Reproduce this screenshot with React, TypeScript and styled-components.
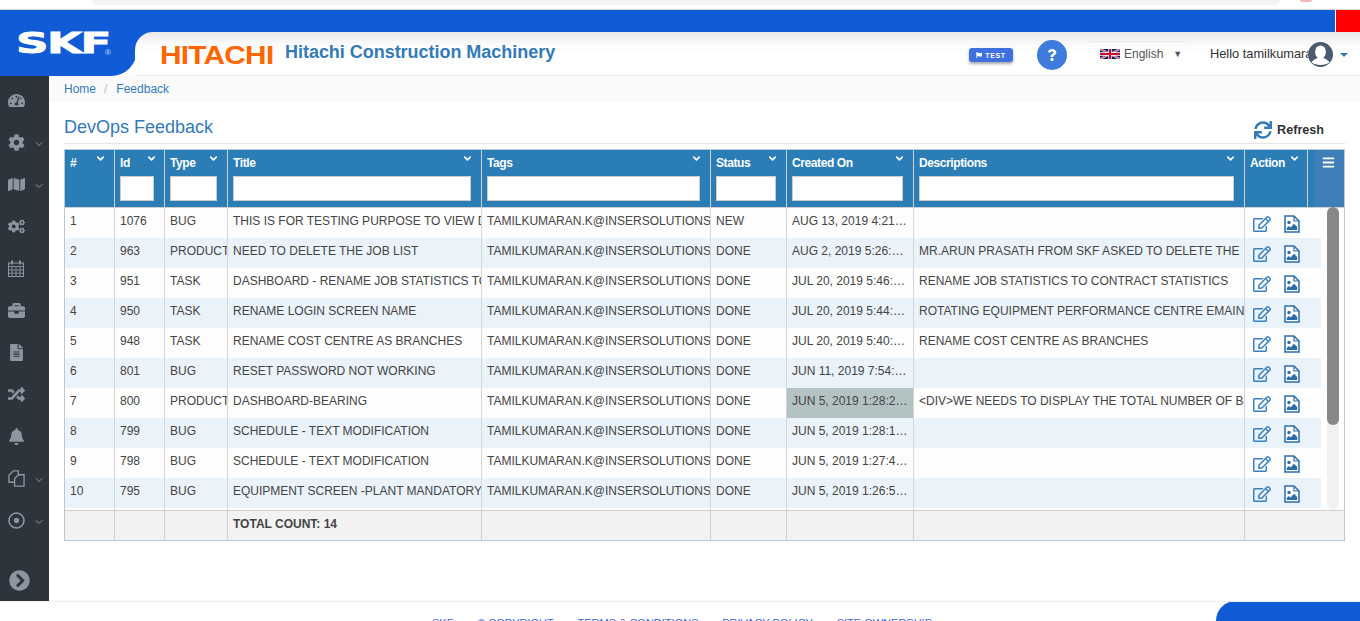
import React from 'react'
import styled, { createGlobalStyle } from 'styled-components'
import {
  FaBars, FaBell, FaBriefcase, FaChevronCircleRight, FaCog, FaCogs, FaFileAlt, FaMap,
  FaQuestion, FaRandom, FaRegDotCircle, FaRegEdit, FaSync, FaTachometerAlt, FaFlag,
} from 'react-icons/fa'
import { FiChevronDown } from 'react-icons/fi'

const Global = createGlobalStyle`
  html, body { margin: 0; padding: 0; background: #fff; }
  body { font-family: "Liberation Sans", Arial, sans-serif; font-size: 12px; overflow: hidden; }
  * { box-sizing: border-box; }
`

const COLS = '50px 50px 63px 254px 229px 76px 127px 331px'

const Page = styled.div`
  width: 1360px;
  height: 621px;
  overflow: hidden;
  display: flex;
  flex-direction: column;
`
const BrowserStrip = styled.div`
  height: 10px;
  flex: none;
  display: flex;
  align-items: flex-start;
  padding-left: 92px;
  padding-right: 48px;
  border-bottom: 1px solid #d9d9d9;
`
const BrowserPill = styled.div`
  flex: 1;
  height: 5px;
  background: #f1f3f4;
  border-radius: 0 0 10px 10px;
`
const BrowserDot = styled.div`
  width: 12px;
  height: 2px;
  margin-left: 20px;
  background: #f4b6b6;
  border-radius: 0 0 6px 6px;
`
const BlueBar = styled.div`
  height: 22px;
  flex: none;
  display: flex;
  background: #115cd6;
`
const RedBox = styled.div`
  width: 25px;
  margin-left: auto;
  border-left: 1px solid #fff;
  background: #f00;
`
const Header = styled.header`
  height: 44px;
  flex: none;
  display: flex;
  background: linear-gradient(#115cd6, #115cd6) no-repeat 0 0 / 170px 24px;
`
const LogoBlock = styled.div`
  width: 137px;
  flex: none;
  background: #115cd6;
  border-radius: 0 0 26px 0;
  color: #fff;
  padding: 0 0 0 16px;
  display: flex;
  align-items: flex-start;
`
const LogoWord = styled.span`
  font-family: "DejaVu Sans", sans-serif;
  font-weight: 700;
  font-size: 29px;
  line-height: 22px;
  width: 89px;
  display: inline-block;
  transform: scaleX(1.56);
  transform-origin: left top;
  letter-spacing: -1px;
  -webkit-text-stroke: 0.8px #fff;
`
const LogoMark = styled.span`
  font-size: 8px;
  line-height: 10px;
  margin-top: 16px;
  color: #c9d9f5;
`
const HeaderPanel = styled.div`
  flex: 1;
  margin-left: -2px;
  display: flex;
  align-items: flex-start;
  border-radius: 18px 0 0 0;
  border-bottom: 1px solid #eeeeee;
  background: linear-gradient(#e9e9e9, #fafafa 12px, #fff 22px);
`
const Hitachi = styled.span`
  font-weight: 700;
  font-size: 25px;
  line-height: 26px;
  margin: 10px 0 0 25px;
  width: 125px;
  flex: none;
  color: #ff6600;
  display: inline-block;
  transform: scaleX(1.19);
  transform-origin: left center;
  letter-spacing: -0.6px;
`
const Brand = styled.span`
  font-weight: 700;
  font-size: 18px;
  line-height: 22px;
  margin-top: 9px;
  color: #337ab7;
  width: 684px;
  flex: none;
  letter-spacing: -0.03px;
`
const TestBadge = styled.span`
  width: 44px;
  height: 14px;
  margin-top: 16px;
  border-radius: 3px;
  background: #3f70e0;
  box-shadow: 0 2px 3px rgba(0, 0, 0, 0.35);
  color: #fff;
  font-size: 7px;
  font-weight: 700;
  letter-spacing: 0.6px;
  display: flex;
  align-items: center;
  justify-content: center;
  gap: 3px;
`
const HelpButton = styled.span`
  width: 30px;
  height: 30px;
  margin: 8px 0 0 24px;
  border-radius: 50%;
  background: #3f7bdc;
  color: #fff;
  font-size: 12px;
  display: flex;
  align-items: center;
  justify-content: center;
`
const LangBox = styled.div`
  width: 96px;
  height: 24px;
  margin: 9px 0 0 23px;
  border-top: 1px solid #eaeaea;
  padding: 0 0 0 10px;
  display: flex;
  align-items: center;
  gap: 4px;
  color: #555;
  font-size: 12px;
`
const LangCaret = styled.span`
  font-size: 9px;
  margin-left: 6px;
  color: #555;
`
const Hello = styled.span`
  width: 98px;
  margin: 15px 0 0 24px;
  line-height: 14px;
  font-size: 12.8px;
  white-space: nowrap;
  overflow: hidden;
  color: #333;
`
const Avatar = styled.svg`
  width: 25px;
  height: 25px;
  margin-top: 10px;
  flex: none;
`
const UserCaret = styled.span`
  width: 0;
  height: 0;
  margin: 21px 0 0 7px;
  border-left: 4px solid transparent;
  border-right: 4px solid transparent;
  border-top: 4px solid #337ab7;
`
const Middle = styled.div`
  flex: 1;
  min-height: 0;
  display: flex;
`
const Sidebar = styled.nav`
  width: 49px;
  flex: none;
  background: #2c343c;
  padding-top: 3px;
  display: flex;
  flex-direction: column;
`
const SideItem = styled.div`
  height: 42px;
  flex: none;
  padding-left: 8px;
  display: flex;
  align-items: center;
  color: #8f95a0;
  font-size: 17px;
`
const SideIcon = styled.span`
  width: 25px;
  flex: none;
  line-height: 0;
`
const SideChevron = styled(FiChevronDown)`
  margin-top: 4px;
  font-size: 12px;
`
const SideToggle = styled.div`
  margin-top: auto;
  padding: 0 0 10px 9px;
  color: #8f95a0;
  font-size: 21px;
  line-height: 0;
`
const Content = styled.main`
  flex: 1;
  min-width: 0;
`
const Crumbs = styled.div`
  height: 26px;
  padding: 6px 0 0 15px;
  background: #fafafa;
  color: #337ab7;
  line-height: 14px;
`
const CrumbSep = styled.span`
  color: #bbb;
  margin: 0 9px 0 8px;
`
const TitleBar = styled.div`
  margin: 0 15px 0 15px;
  height: 42px;
  padding-top: 15px;
  border-bottom: 1px solid #e5e5e5;
  display: flex;
  justify-content: space-between;
`
const PageTitle = styled.h1`
  margin: 0;
  font-size: 18px;
  font-weight: 400;
  line-height: 20px;
  color: #337ab7;
`
const Refresh = styled.span`
  display: flex;
  align-items: center;
  gap: 5px;
  height: 20px;
  margin: 3px 21px 0 0;
  font-weight: 700;
  color: #333;
  font-size: 12.6px;
  svg { font-size: 18px; color: #337ab7; }
`
const TableBox = styled.div`
  margin: 5px 15px 0;
  border: 1px solid #b5c9dc;
  width: 1281px;
`
const HeadRow = styled.div`
  display: grid;
  grid-template-columns: ${COLS} 63px 36px;
  height: 58px;
  background: #2a7db5;
  border-bottom: 1px solid #d0d0d0;
`
const HeadCell = styled.div`
  border-right: 1px solid #d0d0d0;
  padding: 6px 0 0 5px;
  color: #fff;
  font-weight: 700;
  font-size: 12px;
  letter-spacing: -0.4px;
  line-height: 14px;
`
const HeadLabel = styled.div<{ $gap: number }>`
  display: flex;
  justify-content: space-between;
  padding-right: ${p => p.$gap}px;
  svg { font-size: 11px; margin-top: -3px; stroke-width: 3.5; }
`
const Filter = styled.input<{ $w: number }>`
  display: block;
  width: ${p => p.$w}px;
  height: 25px;
  margin-top: 6px;
  padding: 0;
  background: #fff;
  border: 1px solid #ccc;
`
const MenuWrap = styled.div`
  padding-left: 6px;
`
const MenuButton = styled.div`
  height: 57px;
  border-radius: 3px;
  background: #3f7fb9;
  color: #fff;
  padding: 6px 0 0 8px;
  font-size: 13px;
`
const BodyWrap = styled.div`
  display: flex;
  height: 302px;
`
const Rows = styled.div`
  width: 1256px;
  flex: none;
`
const Row = styled.div<{ $alt: boolean }>`
  display: grid;
  grid-template-columns: ${COLS} 76px;
  height: 30px;
  background: ${p => (p.$alt ? '#eaf3f9' : '#fdfdfd')};
`
const Cell = styled.div<{ $mark?: boolean; $dots?: boolean }>`
  border-right: 1px solid #d6d6d6;
  padding: 6px ${p => (p.$dots ? '5px' : '0')} 0 5px;
  line-height: 14px;
  color: #444;
  white-space: nowrap;
  overflow: hidden;
  text-overflow: ${p => (p.$dots ? 'ellipsis' : 'clip')};
  background: ${p => (p.$mark ? '#b3c3c3' : 'transparent')};
`
const ActionCell = styled.div`
  padding: 7px 0 0 8px;
  display: flex;
  gap: 13px;
  font-size: 18px;
  color: #3b81c0;
`
const Filler = styled.div`
  height: 2px;
  display: grid;
  grid-template-columns: ${COLS};
`
const FillCell = styled.div`
  border-right: 1px solid #d6d6d6;
`
const ScrollTrack = styled.div`
  width: 12px;
  height: 303px;
  margin: -1px 0 0 6px;
  background: #f1f1f1;
  border-radius: 6px;
`
const ScrollThumb = styled.div`
  height: 218px;
  border-radius: 6px;
  background: #888;
`
const TotalRow = styled.div`
  display: grid;
  grid-template-columns: ${COLS} 1fr;
  height: 30px;
  background: #f2f2f2;
  border-top: 1px solid #d0d0d0;
`
const TotalCell = styled.div`
  border-right: 1px solid #d0d0d0;
  padding: 6px 0 0 5px;
  line-height: 14px;
  font-weight: 700;
  color: #444;
`
const Footer = styled.footer`
  height: 20px;
  flex: none;
  padding-left: 432px;
  border-top: 1px solid #eeeeee;
  display: flex;
  overflow: hidden;
`
const FootLinks = styled.div`
  display: flex;
  gap: 23.75px;
  padding-top: 15px;
  color: #3f63d8;
  font-size: 11px;
  line-height: 13px;
  width: 784px;
  white-space: nowrap;
`
const FootBlob = styled.div`
  flex: 1;
  margin-top: -1px;
  background: #115cd6;
  border-radius: 32px 0 0 0;
`

const FlagIcon = () => (
  <svg width="20" height="10" viewBox="0 0 60 30">
    <rect width="60" height="30" fill="#012169" />
    <path d="M0 0L60 30M60 0L0 30" stroke="#fff" strokeWidth="6" />
    <path d="M0 0L60 30M60 0L0 30" stroke="#c8102e" strokeWidth="2.5" />
    <path d="M30 0V30M0 15H60" stroke="#fff" strokeWidth="10" />
    <path d="M30 0V30M0 15H60" stroke="#c8102e" strokeWidth="6" />
  </svg>
)

const UserIcon = () => (
  <Avatar viewBox="0 0 25 25">
    <circle cx="12.5" cy="12.5" r="12.5" fill="#4a5a70" />
    <ellipse cx="12.5" cy="10" rx="5.4" ry="6.6" fill="#fff" />
    <path d="M3.5 20.5C5 17.5 8 17 10 15.5H15C17 17 20 17.5 21.5 20.5C19.5 22 16 23 12.5 23S5.5 22 3.5 20.5Z" fill="#fff" />
  </Avatar>
)

const ImageFileIcon = () => (
  <svg width="16" height="18" viewBox="0 0 16 18">
    <path d="M1 1H10L15 6V17H1Z" fill="#fff" stroke="#2a6da8" strokeWidth="1.5" />
    <path d="M10 1V6H15" fill="none" stroke="#2a6da8" strokeWidth="1.2" />
    <circle cx="5" cy="7.5" r="1.7" fill="#2a6da8" />
    <path d="M2.8 15V12.8L5 11L6.6 12.4L10 8.8L13.2 12V15Z" fill="#2a6da8" />
  </svg>
)

const CalendarIcon = () => (
  <svg width="16" height="17" viewBox="0 0 16 17" fill="none" stroke="currentColor">
    <rect x="0.5" y="3" width="15" height="13.5" strokeWidth="1" />
    <path d="M0.5 6.5H15.5M0.5 10H15.5M0.5 13.2H15.5M4 6.5V16.5M8 6.5V16.5M12 6.5V16.5" strokeWidth="0.9" />
    <path d="M4 0.5V4.5M12 0.5V4.5" strokeWidth="2" />
  </svg>
)

const FilesIcon = () => (
  <svg width="17" height="17" viewBox="0 0 18 18" fill="none" stroke="currentColor" strokeWidth="1.4">
    <path d="M5.5 1H11V5" />
    <path d="M5.5 1L1 5.5V13H7" />
    <path d="M11 5H17V17H7V9Z" />
  </svg>
)

const heads = [
  { label: '#', gap: 8 },
  { label: 'Id', gap: 7, w: 34 },
  { label: 'Type', gap: 8, w: 47 },
  { label: 'Title', gap: 8, w: 238 },
  { label: 'Tags', gap: 8, w: 213 },
  { label: 'Status', gap: 8, w: 60 },
  { label: 'Created On', gap: 8, w: 111 },
  { label: 'Descriptions', gap: 8, w: 315 },
  { label: 'Action', gap: 7 },
]

const mail = 'TAMILKUMARAN.K@INSERSOLUTIONS.COM'
const rows = [
  ['1', '1076', 'BUG', 'THIS IS FOR TESTING PURPOSE TO VIEW DETAILS', 'NEW', 'AUG 13, 2019 4:21:06 PM', ''],
  ['2', '963', 'PRODUCT', 'NEED TO DELETE THE JOB LIST', 'DONE', 'AUG 2, 2019 5:26:14 PM', 'MR.ARUN PRASATH FROM SKF ASKED TO DELETE THE'],
  ['3', '951', 'TASK', 'DASHBOARD - RENAME JOB STATISTICS TO CONTRACT', 'DONE', 'JUL 20, 2019 5:46:11 PM', 'RENAME JOB STATISTICS TO CONTRACT STATISTICS'],
  ['4', '950', 'TASK', 'RENAME LOGIN SCREEN NAME', 'DONE', 'JUL 20, 2019 5:44:20 PM', 'ROTATING EQUIPMENT PERFORMANCE CENTRE EMAINTENANCE'],
  ['5', '948', 'TASK', 'RENAME COST CENTRE AS BRANCHES', 'DONE', 'JUL 20, 2019 5:40:32 PM', 'RENAME COST CENTRE AS BRANCHES'],
  ['6', '801', 'BUG', 'RESET PASSWORD NOT WORKING', 'DONE', 'JUN 11, 2019 7:54:09 PM', ''],
  ['7', '800', 'PRODUCT', 'DASHBOARD-BEARING', 'DONE', 'JUN 5, 2019 1:28:22 PM', '<DIV>WE NEEDS TO DISPLAY THE TOTAL NUMBER OF BEARINGS'],
  ['8', '799', 'BUG', 'SCHEDULE - TEXT MODIFICATION', 'DONE', 'JUN 5, 2019 1:28:14 PM', ''],
  ['9', '798', 'BUG', 'SCHEDULE - TEXT MODIFICATION', 'DONE', 'JUN 5, 2019 1:27:45 PM', ''],
  ['10', '795', 'BUG', 'EQUIPMENT SCREEN -PLANT MANDATORY FIELD', 'DONE', 'JUN 5, 2019 1:26:51 PM', ''],
]

const sideItems = [
  { icon: <FaTachometerAlt /> },
  { icon: <FaCog />, more: true },
  { icon: <FaMap />, more: true },
  { icon: <FaCogs /> },
  { icon: <CalendarIcon /> },
  { icon: <FaBriefcase /> },
  { icon: <FaFileAlt /> },
  { icon: <FaRandom /> },
  { icon: <FaBell /> },
  { icon: <FilesIcon />, more: true },
  { icon: <FaRegDotCircle />, more: true },
]

export default function App() {
  return (
    <Page>
      <Global />
      <BrowserStrip>
        <BrowserPill />
        <BrowserDot />
      </BrowserStrip>
      <BlueBar>
        <RedBox />
      </BlueBar>
      <Header>
        <LogoBlock>
          <LogoWord>SKF</LogoWord>
          <LogoMark>®</LogoMark>
        </LogoBlock>
        <HeaderPanel>
          <Hitachi>HITACHI</Hitachi>
          <Brand>Hitachi Construction Machinery</Brand>
          <TestBadge><FaFlag size={6} />TEST</TestBadge>
          <HelpButton><FaQuestion /></HelpButton>
          <LangBox>
            <FlagIcon />
            English
            <LangCaret>▼</LangCaret>
          </LangBox>
          <Hello>Hello tamilkumaran</Hello>
          <UserIcon />
          <UserCaret />
        </HeaderPanel>
      </Header>
      <Middle>
        <Sidebar>
          {sideItems.map((s, i) => (
            <SideItem key={i}>
              <SideIcon>{s.icon}</SideIcon>
              {s.more && <SideChevron />}
            </SideItem>
          ))}
          <SideToggle><FaChevronCircleRight /></SideToggle>
        </Sidebar>
        <Content>
          <Crumbs>Home<CrumbSep>/</CrumbSep>Feedback</Crumbs>
          <TitleBar>
            <PageTitle>DevOps Feedback</PageTitle>
            <Refresh><FaSync />Refresh</Refresh>
          </TitleBar>
          <TableBox>
            <HeadRow>
              {heads.map(h => (
                <HeadCell key={h.label}>
                  <HeadLabel $gap={h.gap}>{h.label}<FiChevronDown /></HeadLabel>
                  {h.w && <Filter $w={h.w} />}
                </HeadCell>
              ))}
              <MenuWrap><MenuButton><FaBars /></MenuButton></MenuWrap>
            </HeadRow>
            <BodyWrap>
              <Rows>
                {rows.map((r, i) => (
                  <Row key={r[0]} $alt={i % 2 === 1}>
                    <Cell>{r[0]}</Cell>
                    <Cell>{r[1]}</Cell>
                    <Cell>{r[2]}</Cell>
                    <Cell>{r[3]}</Cell>
                    <Cell>{mail}</Cell>
                    <Cell>{r[4]}</Cell>
                    <Cell $dots $mark={i === 6}>{r[5]}</Cell>
                    <Cell>{r[6]}</Cell>
                    <ActionCell><FaRegEdit /><ImageFileIcon /></ActionCell>
                  </Row>
                ))}
                <Filler>
                  {heads.slice(0, 8).map(h => <FillCell key={h.label} />)}
                </Filler>
              </Rows>
              <ScrollTrack><ScrollThumb /></ScrollTrack>
            </BodyWrap>
            <TotalRow>
              <TotalCell />
              <TotalCell />
              <TotalCell />
              <TotalCell>TOTAL COUNT: 14</TotalCell>
              <TotalCell />
              <TotalCell />
              <TotalCell />
              <TotalCell />
            </TotalRow>
          </TableBox>
        </Content>
      </Middle>
      <Footer>
        <FootLinks>
          <span>SKF</span>
          <span>© COPYRIGHT</span>
          <span>TERMS &amp; CONDITIONS</span>
          <span>PRIVACY POLICY</span>
          <span>SITE OWNERSHIP</span>
        </FootLinks>
        <FootBlob />
      </Footer>
    </Page>
  )
}
